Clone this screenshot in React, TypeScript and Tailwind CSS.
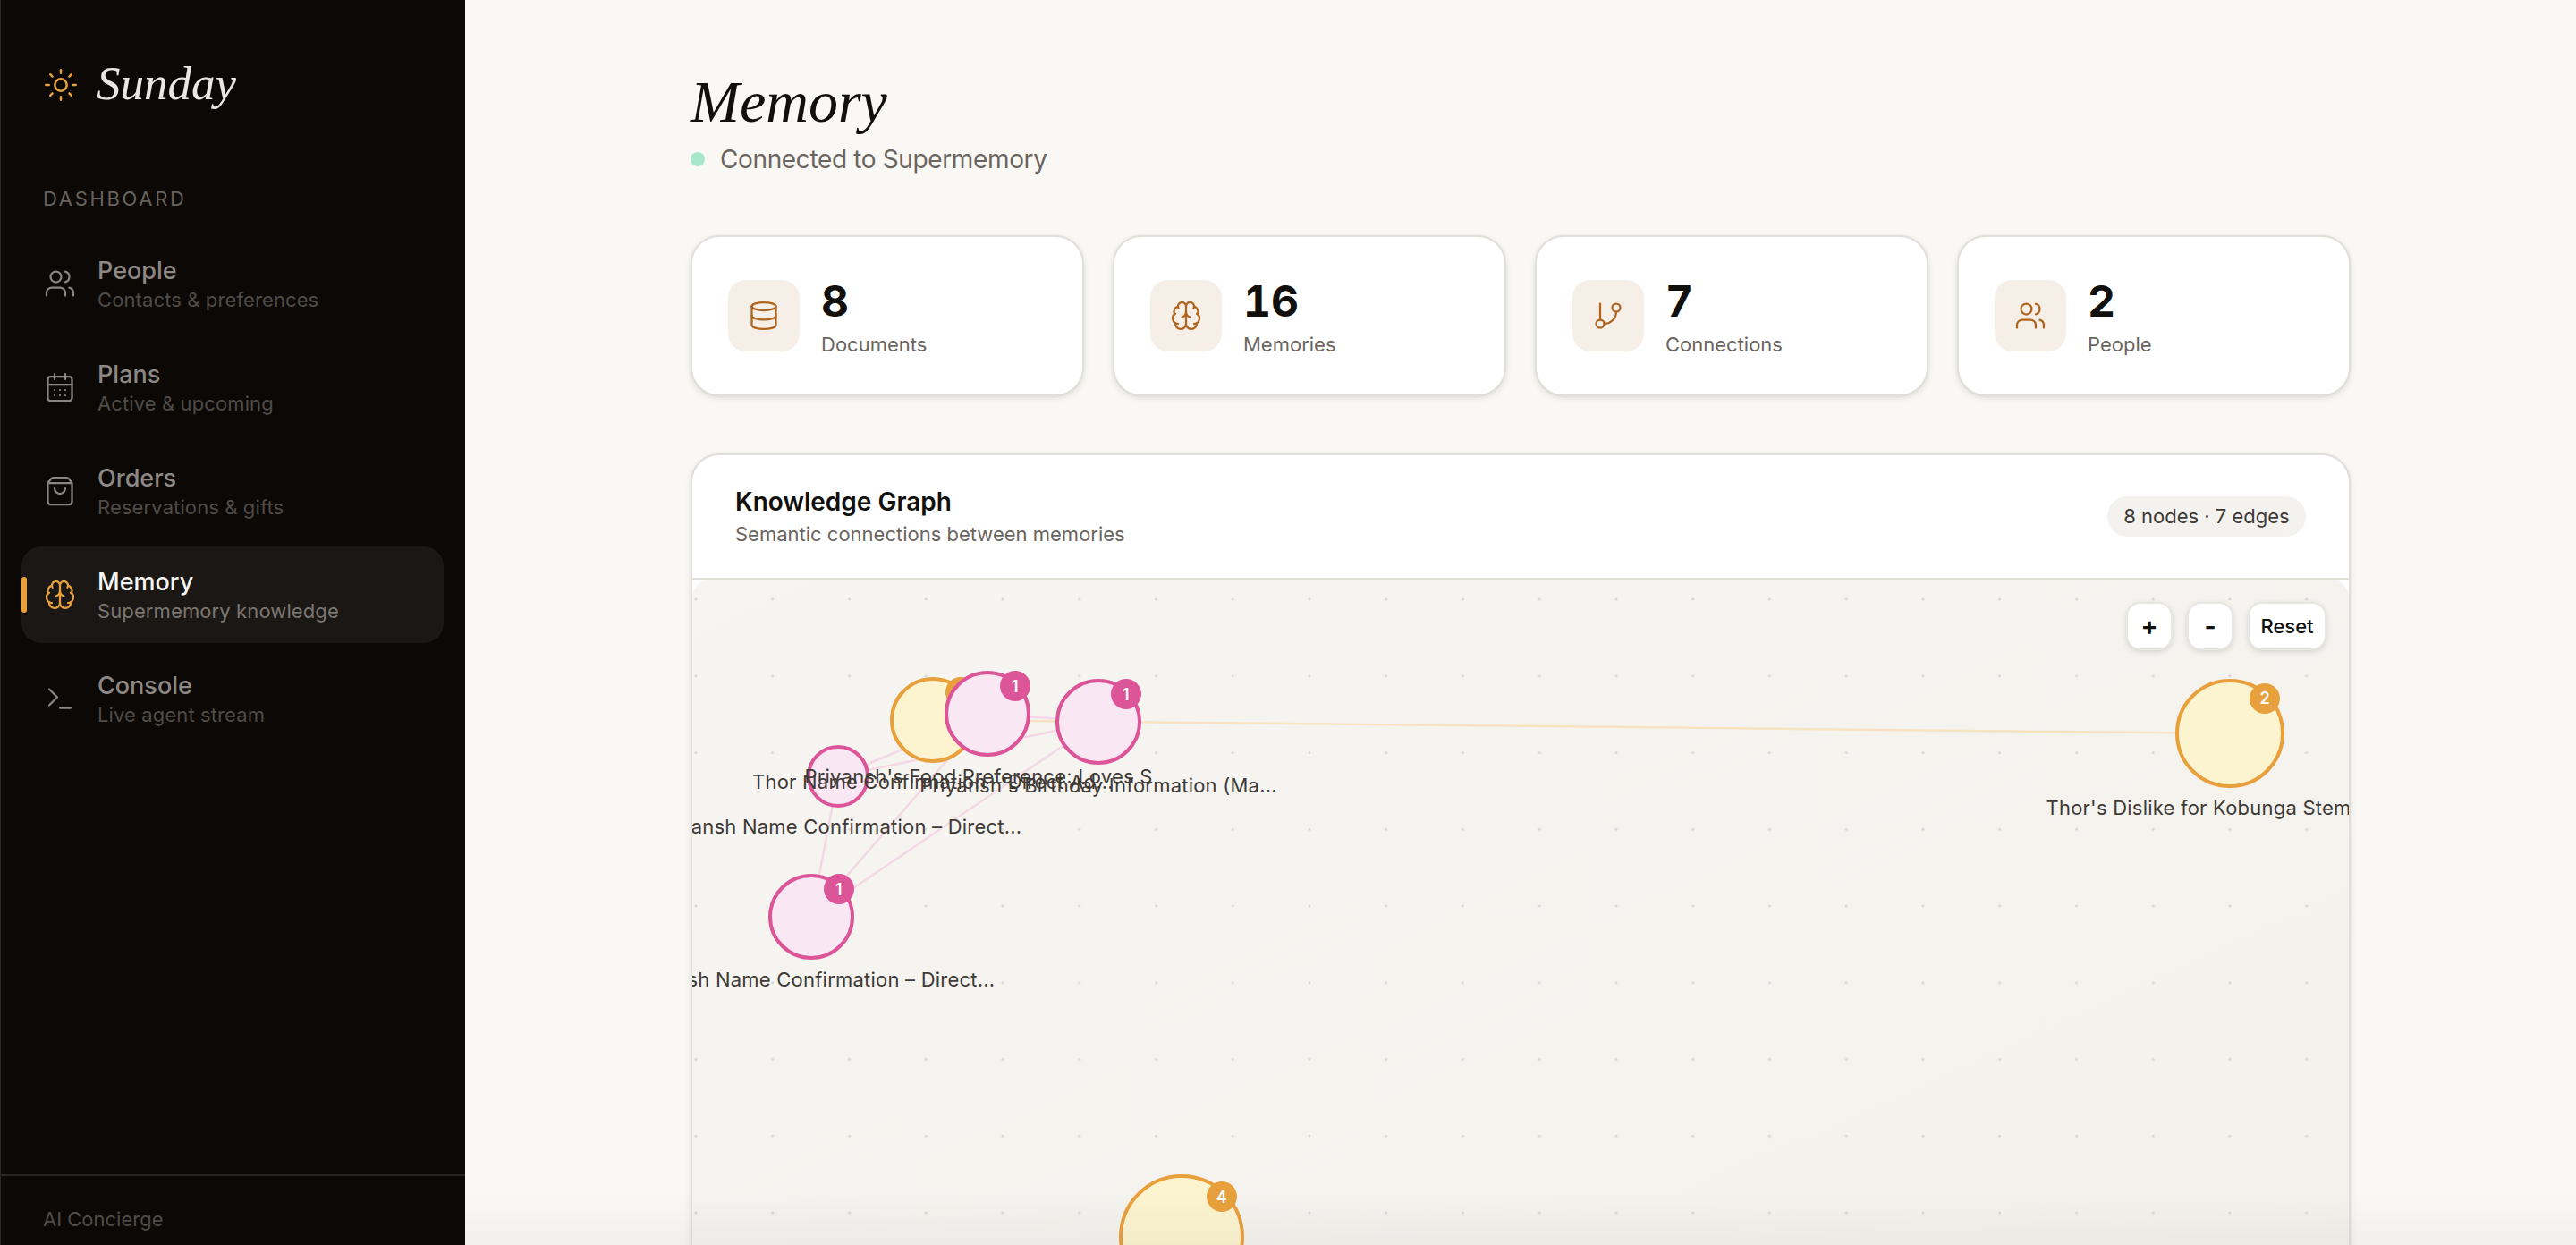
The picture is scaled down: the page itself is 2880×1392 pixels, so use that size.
import { Brain, CalendarDays, Database, GitBranch, ShoppingBag, Sun, Terminal, Users } from "lucide-react";

const navItems = [
  { label: "People", sub: "Contacts & preferences", Icon: Users },
  { label: "Plans", sub: "Active & upcoming", Icon: CalendarDays },
  { label: "Orders", sub: "Reservations & gifts", Icon: ShoppingBag },
  { label: "Memory", sub: "Supermemory knowledge", Icon: Brain, active: true },
  { label: "Console", sub: "Live agent stream", Icon: Terminal },
];

const stats = [
  { value: "8", label: "Documents", Icon: Database },
  { value: "16", label: "Memories", Icon: Brain },
  { value: "7", label: "Connections", Icon: GitBranch },
  { value: "2", label: "People", Icon: Users },
];

// graph coordinates are relative to the canvas
const nodes = [
  { id: "a", x: 269, y: 157, size: 96, kind: "amber", badge: 2, label: "Thor Name Confirmation – Direct Ad...", labelX: 269, labelY: 226 },
  { id: "d", x: 163, y: 220, size: 70, kind: "pink", label: "Priyansh Name Confirmation – Direct...", labelX: 163, labelY: 276 },
  { id: "b", x: 330, y: 150, size: 96, kind: "pink", badge: 1, label: "Priyansh's Food Preference: Loves S", labelX: 320, labelY: 220 },
  { id: "c", x: 454, y: 159, size: 96, kind: "pink", badge: 1, label: "Priyansh's Birthday Information (Ma...", labelX: 454, labelY: 230 },
  { id: "e", x: 133, y: 377, size: 96, kind: "pink", badge: 1, label: "Priyansh Name Confirmation – Direct...", labelX: 133, labelY: 447 },
  { id: "f", x: 1719, y: 172, size: 122, kind: "amber", badge: 2, label: "Thor's Dislike for Kobunga Stem Curl...", labelX: 1719, labelY: 255 },
  { id: "g", x: 547, y: 735, size: 140, kind: "amber", badge: 4, label: "", labelX: 547, labelY: 820 },
];

const edges = [
  { from: "a", to: "f", color: "#f7e2c2" },
  { from: "b", to: "c", color: "#f4d8e6" },
  { from: "d", to: "b", color: "#f4d8e6" },
  { from: "d", to: "c", color: "#f4d8e6" },
  { from: "e", to: "d", color: "#f4d8e6" },
  { from: "e", to: "b", color: "#f4d8e6" },
  { from: "e", to: "c", color: "#f4d8e6" },
];

function Sidebar() {
  return (
    <aside className="flex h-full w-[520px] shrink-0 flex-col border-l border-[#2c2926] bg-[#0c0806]">
      <div className="mt-[70px] flex h-[50px] items-center gap-[20px] pl-[47px]">
        <Sun className="h-[40px] w-[40px] text-[#e8a03c]" strokeWidth={1.5} />
        <span className="mb-[3px] font-['Liberation_Serif',serif] text-[53px] italic leading-none text-[#e9e7e4]">Sunday</span>
      </div>
      <div className="mt-[88px] pl-[47px] text-[22px] leading-[28px] tracking-[0.122em] text-[#66625d]">DASHBOARD</div>
      <nav className="mt-[27px] flex flex-col gap-[8px] pl-[23px] pr-[24px]">
        {navItems.map(({ label, sub, Icon, active }) => (
          <div
            key={label}
            className={
              active
                ? "relative flex h-[108px] items-center gap-[24px] rounded-[22px] bg-[#1a1714] pl-[25px]"
                : "relative flex h-[108px] items-center gap-[24px] rounded-[22px] pl-[25px]"
            }
          >
            {active && <span className="absolute left-0 top-[34px] h-[40px] w-[6px] rounded-full bg-[#e8a03c]" />}
            <Icon className={active ? "h-[36px] w-[36px] text-[#e8a03c]" : "h-[36px] w-[36px] text-[#8a8580]"} strokeWidth={1.5} />
            <div className="mt-[1px]">
              <div className={active ? "text-[27px] font-medium leading-[36px] text-[#f6f5f3]" : "text-[27px] font-medium leading-[36px] text-[#8d8883]"}>
                {label}
              </div>
              <div className={active ? "-mt-[1px] text-[22px] leading-[30px] tracking-[0.005em] text-[#7a7570]" : "-mt-[1px] text-[22px] leading-[30px] tracking-[0.005em] text-[#4f4b47]"}>
                {sub}
              </div>
            </div>
          </div>
        ))}
      </nav>
      <div className="mt-auto h-[79px] border-t-2 border-[#292522] pl-[47px] pt-[33px] text-[22px] leading-[30px] text-[#4f4b47]">AI Concierge</div>
    </aside>
  );
}

function StatCard({ value, label, Icon }: { value: string; label: string; Icon: typeof Users }) {
  return (
    <div className="flex h-[180px] items-center gap-[24px] rounded-[32px] border-2 border-[#e1dfda] bg-white px-[40px] shadow-[0_2px_6px_rgba(0,0,0,0.12)]">
      <div className="flex h-[80px] w-[80px] items-center justify-center rounded-[20px] bg-[#f6efe8]">
        <Icon className="h-[36px] w-[36px] text-[#b0651f]" strokeWidth={1.5} />
      </div>
      <div className="mt-[7px] h-[89px]">
        <div className="text-[48px] font-bold leading-[50px] tabular-nums text-[#12100d]">{value}</div>
        <div className="mt-[7px] text-[22px] leading-[32px] text-[#6b6560]">{label}</div>
      </div>
    </div>
  );
}

function GraphCanvas() {
  const byId = Object.fromEntries(nodes.map((n) => [n.id, n]));
  return (
    <div className="relative h-[860px] overflow-hidden rounded-t-[20px] bg-gradient-to-br from-[#f6f5f1] to-[#f3f1ec]">
      <svg className="absolute inset-0 h-full w-full">
        <defs>
          <pattern id="dots" x="4" y="22" width="85.75" height="85.75" patternUnits="userSpaceOnUse">
            <circle cx="0" cy="0" r="1.6" fill="#d9d7d3" />
            <circle cx="85.75" cy="0" r="1.6" fill="#d9d7d3" />
            <circle cx="0" cy="85.75" r="1.6" fill="#d9d7d3" />
            <circle cx="85.75" cy="85.75" r="1.6" fill="#d9d7d3" />
          </pattern>
        </defs>
        <rect width="100%" height="100%" fill="url(#dots)" />
        {edges.map((e) => (
          <line
            key={e.from + e.to}
            x1={byId[e.from].x}
            y1={byId[e.from].y}
            x2={byId[e.to].x}
            y2={byId[e.to].y}
            stroke={e.color}
            strokeWidth={2.5}
          />
        ))}
      </svg>

      {nodes.map((n) => (
        <div
          key={n.id}
          className={
            n.kind === "amber"
              ? "absolute rounded-full border-[4px] border-[#e8a03c] bg-[#fcf3cf]"
              : "absolute rounded-full border-[4px] border-[#dd5599] bg-[#f9e7f3]"
          }
          style={{ left: n.x - n.size / 2, top: n.y - n.size / 2, width: n.size, height: n.size }}
        >
          {n.badge && (
            <span
              className={
                n.kind === "amber"
                  ? "absolute flex h-[34px] w-[34px] items-center justify-center rounded-full bg-[#e8a03c] text-[18px] font-semibold text-white"
                  : "absolute flex h-[34px] w-[34px] items-center justify-center rounded-full bg-[#dd5599] text-[18px] font-semibold text-white"
              }
              style={{ left: n.size * 0.82 - 21, top: n.size * 0.18 - 21 }}
            >
              {n.badge}
            </span>
          )}
        </div>
      ))}

      {nodes.map((n) => (
        <span
          key={n.id}
          className="absolute -translate-x-1/2 whitespace-nowrap text-[22px] leading-[28px] tracking-[0.01em] text-[#3f3a36]"
          style={{ left: n.labelX, top: n.labelY - 14 }}
        >
          {n.label}
        </span>
      ))}

      <div className="absolute right-[25px] top-[25px] flex gap-[16px] text-[#12100d]">
        <button className="h-[54px] w-[52px] rounded-[16px] border-2 border-[#e8e6e2] bg-white text-[28px] font-bold leading-none shadow-[0_2px_6px_rgba(0,0,0,0.12)]">+</button>
        <button className="h-[54px] w-[52px] rounded-[16px] border-2 border-[#e8e6e2] bg-white text-[28px] font-bold leading-none shadow-[0_2px_6px_rgba(0,0,0,0.12)]">-</button>
        <button className="h-[54px] w-[88px] rounded-[16px] border-2 border-[#e8e6e2] bg-white text-[22px] font-medium leading-none shadow-[0_2px_6px_rgba(0,0,0,0.12)]">Reset</button>
      </div>
    </div>
  );
}

export default function App() {
  return (
    <div className="flex h-screen overflow-hidden bg-[#f9f8f5] font-['Inter',sans-serif]">
      <Sidebar />
      <main className="relative flex-1 overflow-hidden">
        <div className="mx-auto w-[1856px] pt-[78px]">
          <h1 className="font-['Liberation_Serif',serif] text-[66px] font-normal italic leading-[72px] text-[#12100d]">Memory</h1>
          <div className="mt-[8px] flex h-[40px] items-center gap-[17px] text-[28px] tracking-[-0.013em] text-[#6b6560]">
            <span className="h-[16px] w-[16px] rounded-full bg-[#a7e8cb]" />
            Connected to Supermemory
          </div>

          <div className="mt-[65px] grid grid-cols-4 gap-[32px]">
            {stats.map((s) => (
              <StatCard key={s.label} {...s} />
            ))}
          </div>

          <section className="mt-[64px] overflow-hidden rounded-t-[32px] border-2 border-[#e1dfda] bg-white shadow-[0_2px_6px_rgba(0,0,0,0.1)]">
            <header className="flex h-[139px] items-center justify-between border-b-2 border-[#e1dfda] pl-[48px] pr-[48px]">
              <div>
                <h2 className="text-[28px] font-semibold leading-[36px] text-[#12100d]">Knowledge Graph</h2>
                <p className="mt-[2px] text-[22px] leading-[32px] text-[#6b6560]">Semantic connections between memories</p>
              </div>
              <span className="flex h-[45px] w-[222px] items-center justify-center rounded-full bg-[#f3f2ef] text-[22px] text-[#3f3a36]">
                8 nodes · 7 edges
              </span>
            </header>
            <GraphCanvas />
          </section>
        </div>
        <div className="pointer-events-none absolute inset-x-0 bottom-0 h-[60px] bg-gradient-to-b from-transparent to-[rgba(0,0,0,0.035)]" />
      </main>
    </div>
  );
}
